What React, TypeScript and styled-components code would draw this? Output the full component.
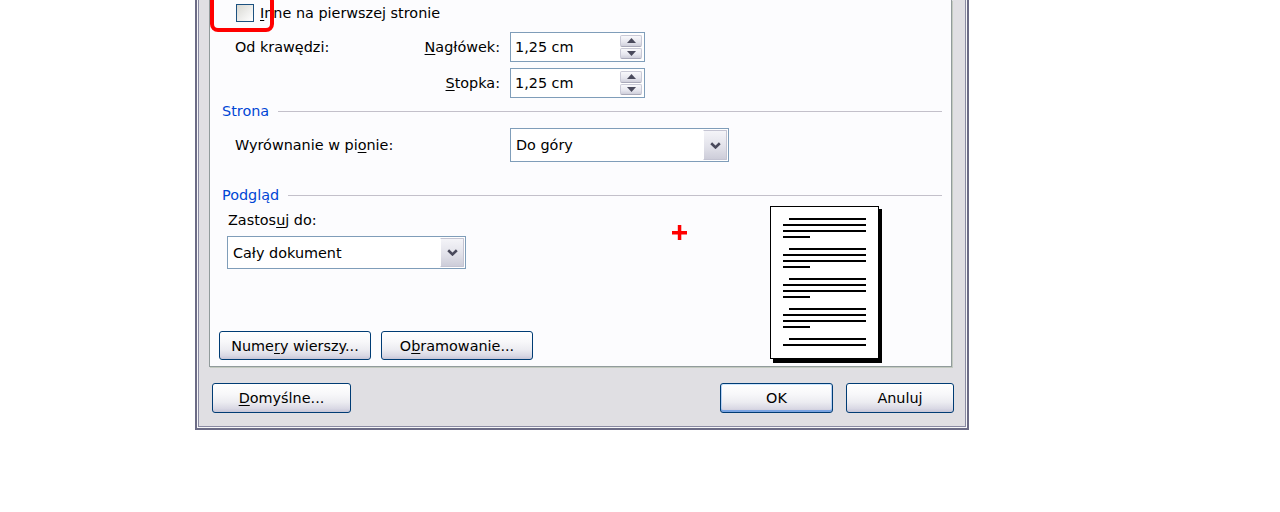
import React from 'react';
import styled, { createGlobalStyle } from 'styled-components';

const Global = createGlobalStyle`
  html, body { margin: 0; padding: 0; background: #ffffff; }
  body {
    font-family: "DejaVu Sans", Verdana, sans-serif;
    font-size: 14.4px;
    color: #000;
  }
`;

const Screen = styled.div`
  width: 1280px;
  height: 512px;
  overflow: hidden;
  background: #ffffff;
  padding-left: 195px;
  box-sizing: border-box;
`;

const Dialog = styled.div`
  position: relative;
  width: 774px;
  box-sizing: border-box;
  border: 2px solid #6c6c86;
  border-top: none;
  padding: 0 1px 1px 1px;
  background: #f7f7f9;
`;

const DialogBody = styled.div`
  border: 1px solid #8a8aa2;
  border-top: none;
  background: #e0dfe3;
  padding-bottom: 13px;
`;

const Highlight = styled.div`
  position: absolute;
  left: 13px;
  top: -7px;
  width: 64px;
  height: 39px;
  box-sizing: border-box;
  border: 4px solid #ff0000;
  border-radius: 8px;
  pointer-events: none;
`;

const Panel = styled.div`
  margin: 0 13px 0 10px;
  height: 367px;
  box-sizing: border-box;
  border: 1px solid #919b9c;
  border-top: none;
  background: #fcfcfe;
  box-shadow: 1px 1px 0 #c3cac0;
  display: flex;
  flex-direction: column;
`;

const CheckRow = styled.label`
  display: flex;
  align-items: center;
  height: 22px;
  padding: 4px 0 0 26px;
  box-sizing: border-box;
  gap: 6px;
  line-height: 18px;
`;

const CheckBox = styled.span`
  width: 18px;
  height: 18px;
  box-sizing: border-box;
  border: 1px solid #1c5180;
  background: linear-gradient(135deg, #d8d8d2 0%, #ececea 50%, #ffffff 100%);
`;

const U = styled.span`
  text-decoration: underline;
  text-underline-offset: 2px;
  text-decoration-thickness: 1px;
`;

const MarginGrid = styled.div`
  margin: 10px 0 0 25px;
  width: 410px;
  display: grid;
  grid-template-columns: auto 1fr 135px;
  grid-auto-rows: 30px;
  column-gap: 10px;
  row-gap: 6px;
  align-items: center;
`;

const FieldLabel = styled.span<{ $align?: string }>`
  text-align: ${(p) => p.$align || 'left'};
  white-space: nowrap;
`;

const SpinBox = styled.div`
  height: 30px;
  box-sizing: border-box;
  border: 1px solid #7f9db9;
  background: #fff;
  display: flex;
  align-items: center;
  padding: 2px 2px 2px 4px;
`;

const BoxText = styled.span`
  flex: 1;
  white-space: nowrap;
`;

const SpinButtons = styled.div`
  width: 22px;
  align-self: stretch;
  display: flex;
  flex-direction: column;
  gap: 1px;
`;

const SpinButton = styled.div`
  flex: 1;
  display: flex;
  align-items: center;
  justify-content: center;
  border: 1px solid #c9c9d6;
  border-bottom-color: #a9a9b9;
  border-radius: 2px;
  background: linear-gradient(180deg, #f8f8fb 0%, #e6e6ee 60%, #cfcfdb 100%);
`;

const SectionHeader = styled.div<{ $top: number }>`
  margin-top: ${(p) => p.$top}px;
  height: 18px;
  display: flex;
  align-items: center;
  gap: 9px;
  padding: 0 9px 0 12px;
  color: #0046d5;
  line-height: 18px;
`;

const Rule = styled.div`
  flex: 1;
  height: 1px;
  background: #c3c0ca;
`;

const AlignRow = styled.div`
  margin: 8px 0 0 25px;
  display: flex;
  align-items: center;
  height: 34px;
`;

const AlignLabel = styled.span`
  width: 275px;
`;

const Combo = styled.div<{ $w: number; $h: number }>`
  width: ${(p) => p.$w}px;
  height: ${(p) => p.$h}px;
  box-sizing: border-box;
  border: 1px solid #7f9db9;
  background: #fff;
  display: flex;
  align-items: stretch;
  padding: 1px;
`;

const ComboText = styled.span`
  flex: 1;
  display: flex;
  align-items: center;
  padding-left: 4px;
  white-space: nowrap;
`;

const ComboButton = styled.div`
  width: 24px;
  display: flex;
  align-items: center;
  justify-content: center;
  box-sizing: border-box;
  border: 1px solid #c4c4d2;
  border-left-color: #ffffff;
  border-radius: 1px;
  background: linear-gradient(180deg, #f4f4f8 0%, #e2e2ea 55%, #cdcdd9 100%);
`;

const PreviewArea = styled.div`
  position: relative;
  flex: 1;
  min-height: 0;
  display: flex;
  padding: 0 69px 0 9px;
`;

const PreviewLeft = styled.div`
  flex: 1;
  display: flex;
  flex-direction: column;
  padding-bottom: 6px;
`;

const ApplyLabel = styled.span`
  margin: 7px 0 0 9px;
  line-height: 18px;
`;

const ApplyCombo = styled.div`
  margin: 7px 0 0 8px;
`;

const PanelButtons = styled.div`
  margin-top: auto;
  display: flex;
  gap: 10px;
`;

const XPButton = styled.button<{ $w: number; $h: number; $default?: boolean }>`
  width: ${(p) => p.$w}px;
  height: ${(p) => p.$h}px;
  box-sizing: border-box;
  border: 1px solid #003c74;
  border-radius: 3px;
  padding: 0;
  font: inherit;
  color: #000;
  background: linear-gradient(180deg, #ffffff 0%, #f8f8fa 35%, #ececf1 65%, #d9d8e4 88%, #c6c5d7 100%);
  box-shadow: ${(p) =>
    p.$default
      ? 'inset 0 1px 0 #cee7ff, inset 0 -2px 0 #7aa4e2, inset 1px 0 0 #b5d0f4, inset -1px 0 0 #b5d0f4'
      : 'none'};
`;

const PagePreview = styled.div`
  margin-top: 2px;
  width: 112px;
  height: 157px;
`;

const Crosshair = styled.div`
  position: absolute;
  left: 462px;
  top: 21px;
  width: 15px;
  height: 15px;
`;

const Footer = styled.div`
  display: flex;
  align-items: center;
  padding: 16px 11px 0 13px;
  gap: 13px;
`;

const Spacer = styled.div`
  flex: 1;
`;

const Triangle = ({ up }: { up?: boolean }) => (
  <svg width="9" height="5" viewBox="0 0 9 5">
    <polygon points={up ? '0,5 4.5,0 9,5' : '0,0 4.5,5 9,0'} fill="#4a4a5c" />
  </svg>
);

const Chevron = () => (
  <svg width="11" height="7" viewBox="0 0 11 7">
    <polyline points="1.2,1.2 5.5,5.4 9.8,1.2" fill="none" stroke="#4a4a5c" strokeWidth="2.6" />
  </svg>
);

const Spin = ({ value }: { value: string }) => (
  <SpinBox>
    <BoxText>{value}</BoxText>
    <SpinButtons>
      <SpinButton>
        <Triangle up />
      </SpinButton>
      <SpinButton>
        <Triangle />
      </SpinButton>
    </SpinButtons>
  </SpinBox>
);

const Select = ({ value, w, h }: { value: string; w: number; h: number }) => (
  <Combo $w={w} $h={h}>
    <ComboText>{value}</ComboText>
    <ComboButton>
      <Chevron />
    </ComboButton>
  </Combo>
);

const groups = [4, 4, 4, 4, 2];

const PageDrawing = () => (
  <svg width="112" height="157" viewBox="0 0 112 157">
    <rect x="3" y="3" width="109" height="154" fill="#000" />
    <rect x="0.5" y="0.5" width="108" height="152" fill="#fff" stroke="#000" strokeWidth="1" />
    {groups.map((n, g) =>
      Array.from({ length: n }).map((_, i) => {
        const y = 12 + g * 30 + i * 6;
        const x = i === 0 ? 19 : 13;
        const w = i === 3 ? 27 : 96 - x;
        return <rect key={`${g}-${i}`} x={x} y={y} width={w} height={2} fill="#000" />;
      })
    )}
  </svg>
);

export default function App() {
  return (
    <>
      <Global />
      <Screen>
        <Dialog>
          <DialogBody>
            <Panel>
              <CheckRow>
                <CheckBox />
                <span>
                  <U>I</U>nne na pierwszej stronie
                </span>
              </CheckRow>
              <MarginGrid>
                <FieldLabel>Od krawędzi:</FieldLabel>
                <FieldLabel $align="right">
                  <U>N</U>agłówek:
                </FieldLabel>
                <Spin value="1,25 cm" />
                <span />
                <FieldLabel $align="right">
                  <U>S</U>topka:
                </FieldLabel>
                <Spin value="1,25 cm" />
              </MarginGrid>

              <SectionHeader $top={4}>
                <span>Strona</span>
                <Rule />
              </SectionHeader>
              <AlignRow>
                <AlignLabel>
                  Wyrównanie w pi<U>o</U>nie:
                </AlignLabel>
                <Select value="Do góry" w={219} h={34} />
              </AlignRow>

              <SectionHeader $top={24}>
                <span>Podgląd</span>
                <Rule />
              </SectionHeader>
              <PreviewArea>
                <PreviewLeft>
                  <ApplyLabel>
                    Zastos<U>u</U>j do:
                  </ApplyLabel>
                  <ApplyCombo>
                    <Select value="Cały dokument" w={239} h={33} />
                  </ApplyCombo>
                  <PanelButtons>
                    <XPButton $w={152} $h={29}>
                      Nume<U>r</U>y wierszy...
                    </XPButton>
                    <XPButton $w={152} $h={29}>
                      O<U>b</U>ramowanie...
                    </XPButton>
                  </PanelButtons>
                </PreviewLeft>
                <PagePreview>
                  <PageDrawing />
                </PagePreview>
                <Crosshair>
                  <svg width="15" height="15" viewBox="0 0 15 15">
                    <rect x="0" y="6" width="15" height="3.5" fill="#ff0000" />
                    <rect x="5.8" y="0" width="3.5" height="15" fill="#ff0000" />
                  </svg>
                </Crosshair>
              </PreviewArea>
            </Panel>
            <Footer>
              <XPButton $w={139} $h={30}>
                <U>D</U>omyślne...
              </XPButton>
              <Spacer />
              <XPButton $w={113} $h={30} $default>
                OK
              </XPButton>
              <XPButton $w={108} $h={30}>
                Anuluj
              </XPButton>
            </Footer>
          </DialogBody>
          <Highlight />
        </Dialog>
      </Screen>
    </>
  );
}
